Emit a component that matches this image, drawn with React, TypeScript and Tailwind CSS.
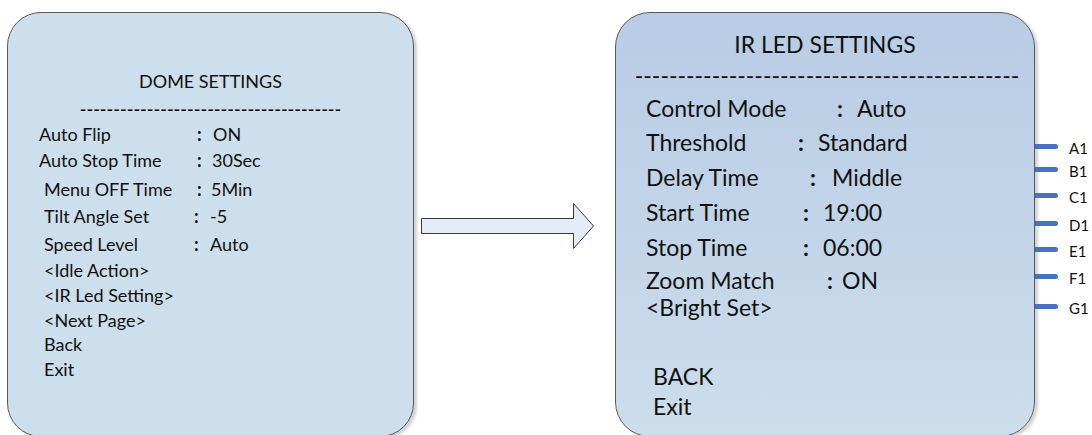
import React from 'react';

type Row = { label: string; pl: string; w?: string; cw?: string; value?: string; mt: string };

const leftRows: Row[] = [
  { label: 'Auto Flip', pl: 'pl-[31px]', w: 'w-[189px]', cw: 'w-[16px]', value: 'ON', mt: 'mt-[5px]' },
  { label: 'Auto Stop Time', pl: 'pl-[31px]', w: 'w-[189px]', cw: 'w-[15px]', value: '30Sec', mt: 'mt-0' },
  { label: 'Menu OFF Time', pl: 'pl-[36px]', w: 'w-[189px]', cw: 'w-[14px]', value: '5Min', mt: 'mt-[3px]' },
  { label: 'Tilt Angle Set', pl: 'pl-[36px]', w: 'w-[186px]', cw: 'w-[16px]', value: '-5', mt: 'mt-[1px]' },
  { label: 'Speed Level', pl: 'pl-[36px]', w: 'w-[186px]', cw: 'w-[16px]', value: 'Auto', mt: 'mt-[2px]' },
  { label: '<Idle Action>', pl: 'pl-[36px]', mt: 'mt-0' },
  { label: '<IR Led Setting>', pl: 'pl-[36px]', mt: '-mt-[1px]' },
  { label: '<Next Page>', pl: 'pl-[36px]', mt: '-mt-[1px]' },
  { label: 'Back', pl: 'pl-[36px]', mt: '-mt-[2px]' },
  { label: 'Exit', pl: 'pl-[36px]', mt: '-mt-[1px]' },
];

const rightRows: Row[] = [
  { label: 'Control Mode', pl: 'pl-[30px]', w: 'w-[221px]', cw: 'w-[20px]', value: 'Auto', mt: 'mt-[6px]' },
  { label: 'Threshold', pl: 'pl-[30px]', w: 'w-[182px]', cw: 'w-[20px]', value: 'Standard', mt: 'mt-0' },
  { label: 'Delay Time', pl: 'pl-[30px]', w: 'w-[194px]', cw: 'w-[22px]', value: 'Middle', mt: 'mt-[1px]' },
  { label: 'Start Time', pl: 'pl-[30px]', w: 'w-[187px]', cw: 'w-[20px]', value: '19:00', mt: 'mt-[1px]' },
  { label: 'Stop Time', pl: 'pl-[30px]', w: 'w-[187px]', cw: 'w-[20px]', value: '06:00', mt: 'mt-[1px]' },
  { label: 'Zoom Match', pl: 'pl-[30px]', w: 'w-[211px]', cw: 'w-[15px]', value: 'ON', mt: '-mt-[1px]' },
  { label: '<Bright Set>', pl: 'pl-[30px]', mt: '-mt-[7px]' },
  { label: 'BACK', pl: 'pl-[37px]', mt: 'mt-[35px]' },
  { label: 'Exit', pl: 'pl-[37px]', mt: '-mt-[4px]' },
];

const markers = [
  { t: 'A1', mt: 'mt-[137px]' },
  { t: 'B1', mt: 'mt-[1px]' },
  { t: 'C1', mt: 'mt-[4px]' },
  { t: 'D1', mt: 'mt-[6px]' },
  { t: 'E1', mt: 'mt-[4px]' },
  { t: 'F1', mt: 'mt-[5px]' },
  { t: 'G1', mt: 'mt-[8px]' },
];

function MenuRow({ r, h }: { r: Row; h: string }) {
  return (
    <div className={`flex items-center whitespace-nowrap ${h} ${r.mt}`}>
      <span className={`shrink-0 ${r.pl} ${r.w ?? ''}`}>{r.label}</span>
      {r.value !== undefined && (
        <>
          <span className={`shrink-0 font-bold ${r.cw}`}>:</span>
          <span>{r.value}</span>
        </>
      )}
    </div>
  );
}

export default function App() {
  return (
    <div className="flex h-[435px] w-[1092px] items-start overflow-hidden bg-white font-['Lato',sans-serif] text-[#111]">
      {/* Left panel */}
      <div className="ml-[7px] mt-[12px] h-[425px] w-[407px] shrink-0 rounded-[34px] border border-[#5a5a5a] bg-[#cddeec] pt-[56px] text-[18px] shadow-[3px_2px_3px_rgba(0,0,0,0.18)]">
        <div className="h-[24px] text-center leading-[24px]">DOME SETTINGS</div>
        <div className="mt-[7px] h-[16px] whitespace-nowrap text-center font-semibold leading-[16px]">
          {'-'.repeat(39)}
        </div>
        {leftRows.map((r) => (
          <MenuRow key={r.label} r={r} h="h-[26px]" />
        ))}
      </div>

      {/* Arrow */}
      <svg className="ml-[7px] mt-[203px] shrink-0" width="174" height="47" viewBox="0 0 174 47">
        <polygon
          points="0.5,15.5 152.5,15.5 152.5,0.5 172.5,23 152.5,45.5 152.5,30.5 0.5,30.5"
          fill="#e6ecf7"
          stroke="#3a3a3a"
          strokeWidth="1"
        />
      </svg>

      {/* Right panel */}
      <div className="ml-[20px] mt-[12px] h-[425px] w-[420px] shrink-0 rounded-[35px] border border-[#5a5a5a] bg-gradient-to-b from-[#b8cce5] to-[#ccddeb] pt-[16px] text-[23px] shadow-[3px_2px_3px_rgba(0,0,0,0.18)]">
        <div className="h-[30px] text-center leading-[30px]">IR LED SETTINGS</div>
        <div className="mt-[6px] h-[20px] whitespace-nowrap pl-[4px] text-center leading-[20px]">
          {'-'.repeat(45)}
        </div>
        {rightRows.map((r) => (
          <MenuRow key={r.label} r={r} h="h-[34px]" />
        ))}
      </div>

      {/* Markers */}
      <div className="flex shrink-0 flex-col text-[15px]">
        {markers.map((m) => (
          <div key={m.t} className={`flex h-[22px] items-center gap-[11px] ${m.mt}`}>
            <div className="-mt-[4px] h-[5px] w-[23px] rounded-r-full bg-[#4472c4]" />
            <span>{m.t}</span>
          </div>
        ))}
      </div>
    </div>
  );
}
